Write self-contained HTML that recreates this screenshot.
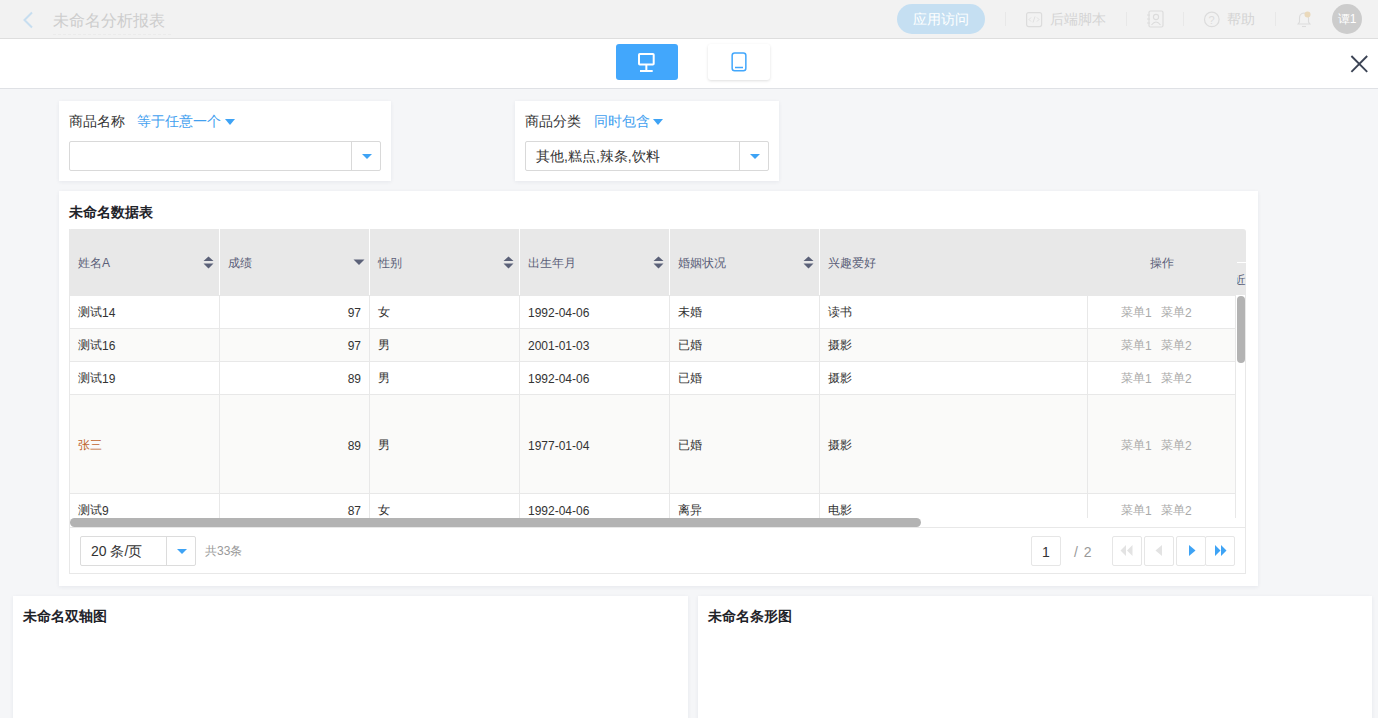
<!DOCTYPE html>
<html><head><meta charset="utf-8">
<style>
*{box-sizing:border-box;margin:0;padding:0}
html,body{width:1378px;height:718px;overflow:hidden}
body{font-family:"Liberation Sans",sans-serif;background:#f5f6f8;position:relative;color:#333}
.a{position:absolute}
#top{left:0;top:0;width:1378px;height:39px;background:#f2f2f2;border-bottom:1px solid #dedede}
#bar2{left:0;top:39px;width:1378px;height:50px;background:#fff;border-bottom:1px solid #dfe1e5}
.card{position:absolute;background:#fff;box-shadow:0 1px 4px rgba(30,40,80,0.07)}
.sep{position:absolute;top:12px;width:1px;height:14px;background:#e8e8e8}
.lbl{position:absolute;font-size:14px;line-height:16px;color:#333;margin-top:-1px}
.blue{color:#42a0ef}
.tri{position:absolute;width:0;height:0;border-left:5px solid transparent;border-right:5px solid transparent;border-top:6px solid #3ea3f5}
.inp{position:absolute;height:30px;border:1px solid #d9d9d9;border-radius:2px;background:#fff}
.ttl{position:absolute;font-size:14px;font-weight:bold;color:#1f2329;line-height:16px}
.th{position:absolute;top:257px;font-size:12px;line-height:12px;color:#5b5f78}
.td{position:absolute;font-size:12px;line-height:12px;color:#333}
.op{position:absolute;font-size:12px;line-height:12px;color:#aaa}
.d{position:relative;top:1px}
.hl{position:absolute;height:1px;background:#e8e8e8}
.vl{position:absolute;width:1px;background:#e8e8e8}
.pb{position:absolute;top:536px;width:30px;height:30px;border:1px solid #e6e6e6;border-radius:2px;background:#fff}
</style></head><body>
<div id="top" class="a">
  <svg class="a" style="left:20px;top:11px" width="14" height="18" viewBox="0 0 14 18"><path d="M12 1.5 L4.5 9 L12 16.5" fill="none" stroke="#c7def0" stroke-width="2"/></svg>
  <div class="a" style="left:53px;top:11px;font-size:16px;color:#cdcdcd;line-height:20px">未命名分析报表</div>
  <div class="a" style="left:53px;top:34px;width:118px;border-top:1px dashed #ebebeb"></div>
  <div class="a" style="left:897px;top:4px;width:88px;height:30px;border-radius:15px;background:#c5dff2;color:#fff;font-size:14px;line-height:30px;text-align:center">应用访问</div>
  <div class="sep" style="left:1005px"></div>
  <svg class="a" style="left:1025px;top:11px" width="18" height="17" viewBox="0 0 18 17"><rect x="1.6" y="1.6" width="15" height="14" rx="2" fill="none" stroke="#dcdcdc" stroke-width="1.2"/><path d="M6 6.5 L4 8.5 L6 10.5 M12 6.5 L14 8.5 L12 10.5 M10 5.5 L8 11.5" fill="none" stroke="#dcdcdc" stroke-width="0.9"/></svg>
  <div class="a" style="left:1050px;top:11px;font-size:14px;line-height:16px;color:#d4d4d4">后端脚本</div>
  <div class="sep" style="left:1126px"></div>
  <svg class="a" style="left:1146px;top:10px" width="19" height="18" viewBox="0 0 19 18"><rect x="3" y="1" width="14" height="16" rx="1.5" fill="none" stroke="#dcdcdc" stroke-width="1.2"/><circle cx="10" cy="7" r="2.6" fill="none" stroke="#dcdcdc" stroke-width="1.1"/><path d="M5.5 15 Q10 9 14.5 15" fill="none" stroke="#dcdcdc" stroke-width="1.1"/><path d="M1 5h3M1 9h3M1 13h3" stroke="#dcdcdc" stroke-width="1"/></svg>
  <div class="sep" style="left:1183px"></div>
  <svg class="a" style="left:1203px;top:11px" width="17" height="17" viewBox="0 0 17 17"><circle cx="8.8" cy="8.4" r="7.3" fill="none" stroke="#dcdcdc" stroke-width="1.2"/><text x="8.5" y="12.5" font-size="11" text-anchor="middle" fill="#dcdcdc" font-family="Liberation Sans">?</text></svg>
  <div class="a" style="left:1227px;top:11px;font-size:14px;line-height:16px;color:#d4d4d4">帮助</div>
  <div class="sep" style="left:1275px"></div>
  <svg class="a" style="left:1296px;top:10px" width="17" height="18" viewBox="0 0 17 18"><path d="M2 14 L3.5 12 L3.5 8 Q3.5 3.5 8 3 Q12.5 3.5 12.5 8 L12.5 12 L14 14 Z" fill="none" stroke="#dcdcdc" stroke-width="1.1"/><path d="M6 16.5h4" stroke="#dcdcdc" stroke-width="1.1"/><circle cx="11.5" cy="4.5" r="3" fill="#ead9bb"/></svg>
  <div class="a" style="left:1332px;top:4px;width:30px;height:30px;border-radius:15px;background:#cccccc;color:#fff;font-size:12px;line-height:30px;text-align:center">谭1</div>
</div>
<div id="bar2" class="a">
  <div class="a" style="left:616px;top:5px;width:62px;height:36px;background:#42a7fc;border-radius:3px"></div>
  <svg class="a" style="left:636px;top:12px" width="22" height="22" viewBox="0 0 22 22"><rect x="3" y="3" width="14.7" height="10.6" rx="0.8" fill="none" stroke="#fff" stroke-width="2"/><path d="M10.35 13.6v5.4M4 19.9h12.7" stroke="#fff" stroke-width="2"/></svg>
  <div class="a" style="left:708px;top:5px;width:62px;height:36px;background:#fff;border-radius:3px;box-shadow:0 1px 3px rgba(0,0,0,0.13)"></div>
  <svg class="a" style="left:729px;top:12px" width="20" height="22" viewBox="0 0 20 22"><rect x="3.15" y="2.05" width="13.7" height="17.8" rx="2.5" fill="none" stroke="#42a7fc" stroke-width="1.5"/><path d="M6 16.5h8" stroke="#42a7fc" stroke-width="1.5"/></svg>
  <svg class="a" style="left:1349px;top:15px" width="20" height="20" viewBox="0 0 20 20"><path d="M2.4 2L18.2 17.8M18.2 2L2.4 17.8" stroke="#3c4455" stroke-width="1.9"/></svg>
</div>

<!-- filter 1 -->
<div class="card" style="left:59px;top:101px;width:332px;height:80px"></div>
<div class="lbl" style="left:69px;top:114px">商品名称</div>
<div class="lbl blue" style="left:137px;top:114px">等于任意一个</div>
<div class="tri" style="left:225px;top:119px"></div>
<div class="inp" style="left:69px;top:141px;width:312px"></div>
<div class="vl" style="left:351px;top:142px;height:28px;background:#d9d9d9"></div>
<div class="tri" style="left:362px;top:154px;border-left-width:5px;border-right-width:5px;border-top-width:5px"></div>

<!-- filter 2 -->
<div class="card" style="left:515px;top:101px;width:264px;height:80px"></div>
<div class="lbl" style="left:525px;top:114px">商品分类</div>
<div class="lbl blue" style="left:594px;top:114px">同时包含</div>
<div class="tri" style="left:653px;top:119px"></div>
<div class="inp" style="left:525px;top:141px;width:244px"></div>
<div class="lbl" style="left:536px;top:149px;font-size:14px">其他,糕点,辣条,饮料</div>
<div class="vl" style="left:739px;top:142px;height:28px;background:#d9d9d9"></div>
<div class="tri" style="left:750px;top:154px;border-left-width:5px;border-right-width:5px;border-top-width:5px"></div>

<!-- table card -->
<div class="card" style="left:59px;top:191px;width:1199px;height:395px"></div>
<div class="ttl" style="left:69px;top:204px">未命名数据表</div>
<div class="a" style="left:69px;top:229px;width:1177px;height:66px;background:#e8e8e8;border-radius:2px 3px 0 0"></div>
<div class="a" style="left:219px;top:229px;width:1px;height:66px;background:#fff"></div>
<div class="a" style="left:369px;top:229px;width:1px;height:66px;background:#fff"></div>
<div class="a" style="left:519px;top:229px;width:1px;height:66px;background:#fff"></div>
<div class="a" style="left:669px;top:229px;width:1px;height:66px;background:#fff"></div>
<div class="a" style="left:819px;top:229px;width:1px;height:66px;background:#fff"></div>
<div class="th" style="left:78px">姓名A</div>
<div class="th" style="left:228px">成绩</div>
<div class="th" style="left:378px">性别</div>
<div class="th" style="left:528px">出生年月</div>
<div class="th" style="left:678px">婚姻状况</div>
<div class="th" style="left:828px">兴趣爱好</div>
<div class="th" style="left:1150px">操作</div>
<svg class="a" style="left:203px;top:256px" width="11" height="13" viewBox="0 0 11 13"><path d="M0.5 5L5.5 0.5L10.5 5Z M0.5 7.5L5.5 12.5L10.5 7.5Z" fill="#5b6178"/></svg>
<svg class="a" style="left:503px;top:256px" width="11" height="13" viewBox="0 0 11 13"><path d="M0.5 5L5.5 0.5L10.5 5Z M0.5 7.5L5.5 12.5L10.5 7.5Z" fill="#5b6178"/></svg>
<svg class="a" style="left:653px;top:256px" width="11" height="13" viewBox="0 0 11 13"><path d="M0.5 5L5.5 0.5L10.5 5Z M0.5 7.5L5.5 12.5L10.5 7.5Z" fill="#5b6178"/></svg>
<svg class="a" style="left:803px;top:256px" width="11" height="13" viewBox="0 0 11 13"><path d="M0.5 5L5.5 0.5L10.5 5Z M0.5 7.5L5.5 12.5L10.5 7.5Z" fill="#5b6178"/></svg>
<svg class="a" style="left:353px;top:259px" width="12" height="7" viewBox="0 0 12 7"><path d="M0.5 0.5L11.5 0.5L6 6Z" fill="#5b6178"/></svg>
<div class="a" style="left:1237px;top:262px;width:9px;height:1px;background:#fff"></div>
<div class="a" style="left:1237px;top:273px;width:9px;height:14px;overflow:hidden"><div style="font-size:12px;line-height:14px;color:#5b5f78;margin-left:-3px">近</div></div>
<div class="a" style="left:70px;top:295px;width:1166px;height:223px;overflow:hidden">
<div class="a" style="left:0;top:0px;width:1166px;height:33px;background:#fff;border-top:1px solid #e8e8e8"></div>
<div class="td" style="left:8px;top:11px;color:#333">测试<span class="d">14</span></div>
<div class="td" style="left:150px;width:141px;text-align:right;top:11px"><span class="d">97</span></div>
<div class="td" style="left:308px;top:11px">女</div>
<div class="td" style="left:458px;top:11px"><span class="d">1992-04-06</span></div>
<div class="td" style="left:608px;top:11px">未婚</div>
<div class="td" style="left:758px;top:11px">读书</div>
<div class="op" style="left:1051px;top:11px">菜单<span class="d">1</span></div>
<div class="op" style="left:1091px;top:11px">菜单<span class="d">2</span></div>
<div class="a" style="left:0;top:33px;width:1166px;height:33px;background:#fafaf9;border-top:1px solid #e8e8e8"></div>
<div class="td" style="left:8px;top:44px;color:#333">测试<span class="d">16</span></div>
<div class="td" style="left:150px;width:141px;text-align:right;top:44px"><span class="d">97</span></div>
<div class="td" style="left:308px;top:44px">男</div>
<div class="td" style="left:458px;top:44px"><span class="d">2001-01-03</span></div>
<div class="td" style="left:608px;top:44px">已婚</div>
<div class="td" style="left:758px;top:44px">摄影</div>
<div class="op" style="left:1051px;top:44px">菜单<span class="d">1</span></div>
<div class="op" style="left:1091px;top:44px">菜单<span class="d">2</span></div>
<div class="a" style="left:0;top:66px;width:1166px;height:33px;background:#fff;border-top:1px solid #e8e8e8"></div>
<div class="td" style="left:8px;top:77px;color:#333">测试<span class="d">19</span></div>
<div class="td" style="left:150px;width:141px;text-align:right;top:77px"><span class="d">89</span></div>
<div class="td" style="left:308px;top:77px">男</div>
<div class="td" style="left:458px;top:77px"><span class="d">1992-04-06</span></div>
<div class="td" style="left:608px;top:77px">已婚</div>
<div class="td" style="left:758px;top:77px">摄影</div>
<div class="op" style="left:1051px;top:77px">菜单<span class="d">1</span></div>
<div class="op" style="left:1091px;top:77px">菜单<span class="d">2</span></div>
<div class="a" style="left:0;top:99px;width:1166px;height:99px;background:#fafaf9;border-top:1px solid #e8e8e8"></div>
<div class="td" style="left:8px;top:144px;color:#c0652d">张三</div>
<div class="td" style="left:150px;width:141px;text-align:right;top:144px"><span class="d">89</span></div>
<div class="td" style="left:308px;top:144px">男</div>
<div class="td" style="left:458px;top:144px"><span class="d">1977-01-04</span></div>
<div class="td" style="left:608px;top:144px">已婚</div>
<div class="td" style="left:758px;top:144px">摄影</div>
<div class="op" style="left:1051px;top:144px">菜单<span class="d">1</span></div>
<div class="op" style="left:1091px;top:144px">菜单<span class="d">2</span></div>
<div class="a" style="left:0;top:198px;width:1166px;height:33px;background:#fff;border-top:1px solid #e8e8e8"></div>
<div class="td" style="left:8px;top:209px;color:#333">测试<span class="d">9</span></div>
<div class="td" style="left:150px;width:141px;text-align:right;top:209px"><span class="d">87</span></div>
<div class="td" style="left:308px;top:209px">女</div>
<div class="td" style="left:458px;top:209px"><span class="d">1992-04-06</span></div>
<div class="td" style="left:608px;top:209px">离异</div>
<div class="td" style="left:758px;top:209px">电影</div>
<div class="op" style="left:1051px;top:209px">菜单<span class="d">1</span></div>
<div class="op" style="left:1091px;top:209px">菜单<span class="d">2</span></div>
<div class="a" style="left:149px;top:0;width:1px;height:223px;background:#e8e8e8"></div>
<div class="a" style="left:299px;top:0;width:1px;height:223px;background:#e8e8e8"></div>
<div class="a" style="left:449px;top:0;width:1px;height:223px;background:#e8e8e8"></div>
<div class="a" style="left:599px;top:0;width:1px;height:223px;background:#e8e8e8"></div>
<div class="a" style="left:749px;top:0;width:1px;height:223px;background:#e8e8e8"></div>
<div class="a" style="left:1017px;top:0;width:1px;height:223px;background:#e8e8e8"></div>
<div class="a" style="left:1165px;top:0;width:1px;height:223px;background:#e8e8e8"></div>
</div>
<div class="a" style="left:1237px;top:296px;width:8px;height:67px;border-radius:4px;background:#b3b3b3"></div>
<div class="a" style="left:70px;top:518px;width:851px;height:9px;border-radius:5px;background:#b3b3b3"></div>
<div class="a" style="left:69px;top:527px;width:1177px;height:1px;background:#e8e8e8"></div>
<div class="a" style="left:69px;top:229px;width:1px;height:345px;background:#e8e8e8"></div>
<div class="a" style="left:1245px;top:295px;width:1px;height:279px;background:#e8e8e8"></div>
<div class="a" style="left:69px;top:573px;width:1177px;height:1px;background:#e8e8e8"></div>
<div class="inp" style="left:80px;top:536px;width:116px;border-color:#dcdcdc"></div>
<div class="vl" style="left:166px;top:537px;height:28px;background:#dcdcdc"></div>
<div class="tri" style="left:177px;top:549px;border-left-width:5px;border-right-width:5px;border-top-width:5px"></div>
<div class="a" style="left:91px;top:543px;font-size:14px;line-height:16px;color:#333">20 条/页</div>
<div class="a" style="left:205px;top:544px;font-size:12px;line-height:14px;color:#999">共33条</div>
<div class="pb" style="left:1031px"></div>
<div class="a" style="left:1031px;top:544px;width:30px;text-align:center;font-size:14px;line-height:16px;color:#333">1</div>
<div class="a" style="left:1074px;top:544px;font-size:14px;line-height:16px;color:#999;word-spacing:2px">/ 2</div>
<div class="pb" style="left:1112px"></div><div class="pb" style="left:1144px"></div><div class="pb" style="left:1176px"></div><div class="pb" style="left:1205px"></div>
<svg class="a" style="left:1120px;top:545px" width="13" height="11" viewBox="0 0 13 11"><path d="M6 0L0.5 5.5L6 11Z M12.5 0L7 5.5L12.5 11Z" fill="#e3e3e3"/></svg>
<svg class="a" style="left:1155px;top:545px" width="7" height="11" viewBox="0 0 7 11"><path d="M7 0L0.5 5.5L7 11Z" fill="#e3e3e3"/></svg>
<svg class="a" style="left:1189px;top:545px" width="7" height="11" viewBox="0 0 7 11"><path d="M0 0L6.5 5.5L0 11Z" fill="#3ea3f5"/></svg>
<svg class="a" style="left:1215px;top:545px" width="12" height="11" viewBox="0 0 12 11"><path d="M0 0L5.5 5.5L0 11Z M6 0L11.5 5.5L6 11Z" fill="#3ea3f5"/></svg>
<div class="card" style="left:13px;top:596px;width:675px;height:140px"></div>
<div class="ttl" style="left:23px;top:608px">未命名双轴图</div>
<div class="card" style="left:698px;top:596px;width:674px;height:140px"></div>
<div class="ttl" style="left:708px;top:608px">未命名条形图</div>
</body></html>
